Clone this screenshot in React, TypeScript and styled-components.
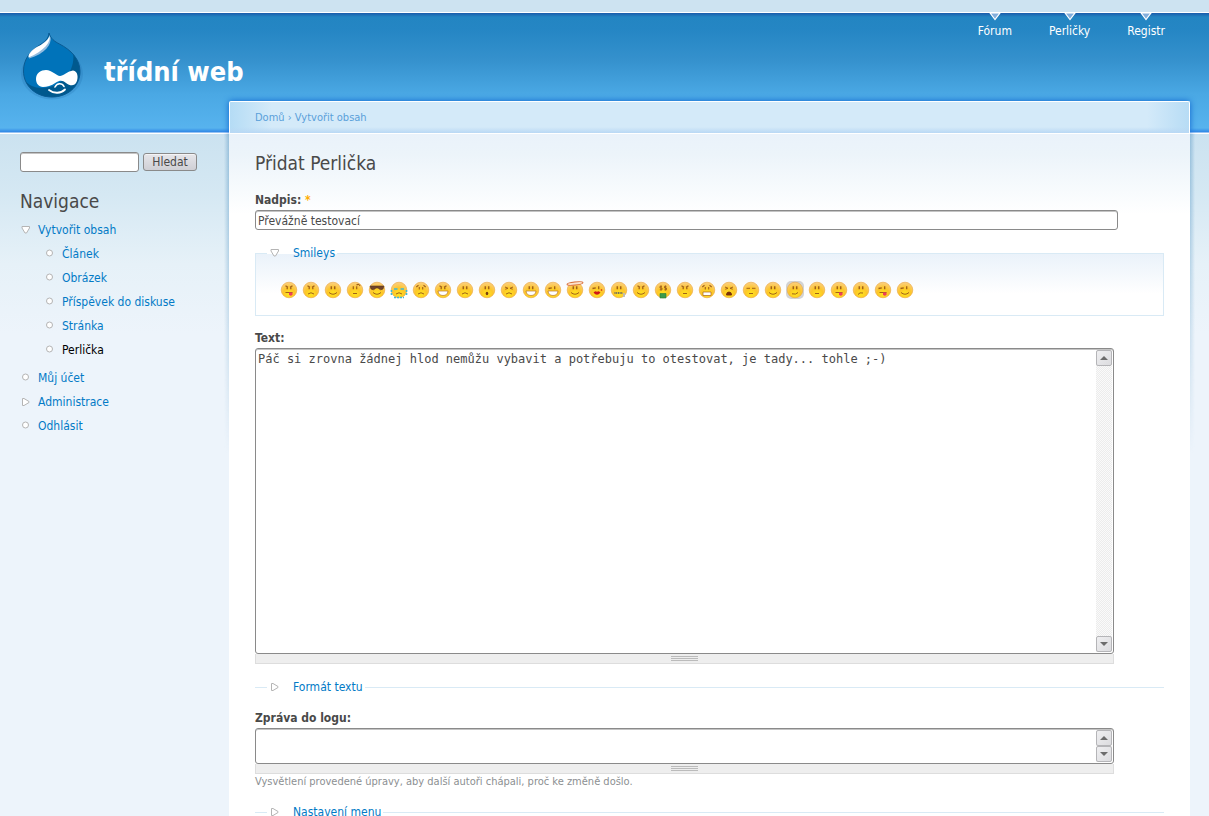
import React from "react";
import styled, { createGlobalStyle, css } from "styled-components";

const sans = '"DejaVu Sans Condensed", "DejaVu Sans", sans-serif';
const link = "#027ac6";
const ink = "#494949";

const GlobalStyle = createGlobalStyle`
  * { box-sizing: border-box; }
  body {
    margin: 0;
    background: #edf5fa;
    color: ${ink};
    font: 12px/20px ${sans};
  }
  a { color: ${link}; text-decoration: none; }
  ul { list-style: none; margin: 0; padding: 0; }
  h1, h2 { margin: 0; font-weight: normal; }
`;

const Page = styled.div`
  min-height: 100vh;
  overflow: hidden;
  background:
    linear-gradient(#cde3f1 0 12px, #fff 12px 13px, #1b5cab 13px, #2385c2 17px, #2586c4 30px, #3591cd 60px, #4aa8e4 94px, #57b3ee 128px, #2f87e6 132px, #fff 133px 134px, transparent 134px) 0 0 / 100% 134px no-repeat,
    linear-gradient(#cbe2f0, #d5e8f3 60px, #e6f1f8 130px, #edf4fb 200px) 0 134px / 100% 200px no-repeat,
    #edf4fb;
`;

const Header = styled.header`
  display: flex;
  justify-content: space-between;
  align-items: flex-start;
  height: 101px;
  padding: 13px 44px 0 16px;
`;

const Brand = styled.a`
  display: flex;
  align-items: center;
  gap: 16px;
  padding-top: 15px;
  color: #fff;
`;

const SiteName = styled.h1`
  padding-top: 12px;
  font-size: 27px;
  line-height: 32px;
  font-weight: bold;
`;

const PrimaryLinks = styled.ul`
  display: flex;
  gap: 37px;
`;

const PrimaryLink = styled.a`
  display: flex;
  flex-direction: column;
  align-items: center;
  color: #fff;
  svg { display: block; }
`;

const Columns = styled.div`
  display: grid;
  grid-template-columns: 229px minmax(0, 1fr);
  padding-right: 19px;
  min-height: calc(100vh - 101px);
`;

const Sidebar = styled.aside`
  padding: 51px 20px 0;
`;

const control = css`
  border: 1px solid #8a8a8a;
  border-radius: 3px;
  background: #fff;
  box-shadow: inset 0 1px 0 #c4c4c4;
  color: ${ink};
  font: 12px/16px ${sans};
  outline: none;
`;

const SearchForm = styled.form`
  display: flex;
  align-items: center;
  gap: 4px;
`;

const SearchInput = styled.input`
  ${control}
  width: 119px;
  height: 20px;
  padding: 0 2px;
`;

const SearchButton = styled.button`
  ${control}
  width: 54px;
  height: 18px;
  padding: 0;
  background: linear-gradient(#e6e6ea, #cfcfd5);
  box-shadow: inset 0 1px 0 #f4f4f6;
`;

const BlockTitle = styled.h2`
  margin-top: 16px;
  font-size: 19px;
  line-height: 26px;
`;

const Menu = styled.ul`
  margin-top: 4px;
  ul { padding: 0 0 4px 24px; }
`;

const MenuLink = styled.a<{ $active?: boolean }>`
  display: flex;
  align-items: center;
  gap: 7px;
  height: 24px;
  ${(p) => p.$active && "color: #000;"}
`;

const Card = styled.main`
  display: flex;
  flex-direction: column;
  min-width: 0;
`;

const Breadcrumb = styled.nav`
  height: 32px;
  padding: 6px 25px 0;
  border: 1px solid #fff;
  border-bottom: 0;
  border-radius: 2px 2px 0 0;
  background:
    linear-gradient(transparent 25px, #b9d8f4),
    linear-gradient(90deg, #b5dcf5, #d4eaf9 42px, #d4eaf9 calc(100% - 42px), #b7dcf5);
  box-shadow: 0 0 6px #0d62cf;
  color: #5aa0da;
  font-size: 11px;
  a { color: #5aa0da; }
`;

const Content = styled.div`
  position: relative;
  flex: 1;
  padding: 16px 26px 0;
  border-top: 1px solid #fff;
  background: linear-gradient(#eaf2fa, #ecf4fa 20px, #fff 80px);
  &::before,
  &::after {
    content: "";
    position: absolute;
    top: 0;
    width: 5px;
    height: 320px;
    mask-image: linear-gradient(#000, transparent);
  }
  &::before {
    right: 100%;
    background: linear-gradient(270deg, #96bfdb, transparent);
  }
  &::after {
    left: 100%;
    background: linear-gradient(90deg, #96bfdb, transparent);
  }
`;

const PageTitle = styled.h2`
  margin-bottom: 14px;
  font-size: 19px;
  line-height: 26px;
`;

const Field = styled.div`
  & + fieldset { margin-top: 13px; }
  fieldset + & { margin-top: 12px; }
`;

const Label = styled.label`
  display: block;
  height: 20px;
  font-weight: bold;
`;

const Required = styled.span`
  color: #ffae00;
`;

const TitleInput = styled.input`
  ${control}
  display: block;
  width: calc(100% - 46px);
  height: 20px;
  padding: 1px 2px 0;
`;

const Fieldset = styled.fieldset<{ $open?: boolean }>`
  min-width: 0;
  margin: 0;
  border: solid #d9eaf5;
  ${(p) =>
    p.$open
      ? css`
          border-width: 1px;
          padding: 19px 24px 17px 25px;
          background: linear-gradient(#eaf2fa, #fff 40px);
          legend { margin-left: -14px; }
        `
      : css`
          border-width: 1px 0 0;
          padding: 0 0 0 12px;
          legend { margin-bottom: -1px; }
        `}
`;

const Legend = styled.legend`
  padding: 0 2px;
  a { display: flex; align-items: center; gap: 13px; }
`;

const SmileyRow = styled.div`
  display: flex;
  flex-wrap: wrap;
  gap: 6px;
  a { display: block; width: 16px; height: 16px; }
  svg { display: block; overflow: visible; }
`;

const Resizable = styled.div`
  width: calc(100% - 50px);
`;

const AreaFrame = styled.div<{ $height: number }>`
  ${control}
  display: flex;
  height: ${(p) => p.$height}px;
  padding: 1px;
`;

const Area = styled.textarea`
  flex: 1;
  min-width: 0;
  padding: 0 1px;
  border: 0;
  outline: none;
  resize: none;
  overflow: hidden;
  background: transparent;
  color: ${ink};
  font: 12px/18px "DejaVu Sans Mono", "Liberation Mono", monospace;
`;

const ScrollTrack = styled.div`
  display: flex;
  flex-direction: column;
  justify-content: space-between;
  width: 16px;
  background: repeating-conic-gradient(#ececec 0 25%, #fafafa 0 50%) 0 0 / 2px 2px;
`;

const ScrollButton = styled.button`
  display: flex;
  align-items: center;
  justify-content: center;
  width: 16px;
  height: 16px;
  padding: 0;
  border: 1px solid #b5b5b8;
  border-radius: 2px;
  background: linear-gradient(135deg, #efeff1, #dcdcdf);
`;

const Grippie = styled.div`
  display: flex;
  justify-content: center;
  height: 10px;
  padding-top: 2px;
  border: 1px solid #ddd;
  border-top: 0;
  background: #eee;
  &::before {
    content: "";
    width: 27px;
    height: 5px;
    background: repeating-linear-gradient(#bbb 0 1px, transparent 1px 2px);
  }
`;

const Description = styled.p`
  margin: 0;
  color: #8c8f92;
  font-size: 11px;
  line-height: 15px;
`;

type Mark = "leaf" | "open" | "closed";

const MarkIcon = ({ kind }: { kind: Mark }) => (
  <svg width="11" height="10" viewBox="0 0 11 10" fill="#fff" stroke="#b4b4b4" strokeLinejoin="round" aria-hidden="true">
    {kind === "leaf" && <circle cx="5.5" cy="4" r="3" />}
    {kind === "open" && <path d="M2 1.5H9.5V3L6.5 8H5L2 3Z" />}
    {kind === "closed" && <path d="M2.5 1.5H4L9 4.5V5.5L4 8.5H2.5Z" />}
  </svg>
);

const Arrow = ({ up }: { up?: boolean }) => (
  <svg width="8" height="4" viewBox="0 0 8 4" aria-hidden="true">
    <path d={up ? "M0 4L4 0L8 4Z" : "M0 0H8L4 4Z"} fill="#6c6c6c" />
  </svg>
);

const dropOutline =
  "M33 5C34.5 10.5 38.5 13.5 43.5 16C55 22 64 31 64 43.5C64 59 51 69 36 69C20 69 7.5 58 7.5 43C7.5 31 14.5 23 23 17.5C28.5 14 32.5 11 33 5Z";

const Logo = () => (
  <svg width="72" height="76" viewBox="0 0 72 76" aria-hidden="true">
    <defs>
      <clipPath id="drop">
        <path d={dropOutline} />
      </clipPath>
    </defs>
    <ellipse cx="36" cy="46" rx="31" ry="25.5" fill="#1d6ba8" opacity=".22" />
    <g clipPath="url(#drop)">
      <rect width="72" height="76" fill="#0073ba" />
      <path d="M57 24C60 43 46 60 26 60C18 60 13 57 9 53L12 76H72V24Z" fill="#00598e" />
    </g>
    <path d={dropOutline} fill="none" stroke="#0a5b93" />
    <path d="M34.5 9C36 16 29 26 13 30.5L14 26Z" fill="#93bde0" />
    <path d="M33.5 7C35.5 14 28 23 12.5 29.5C12 25 18 20 24 17.5C29 14.5 32.5 12 33.5 7Z" fill="#fff" />
    <path d="M20 51C20 45 25 42 30 42C36 42 40.5 48 44 48C47 48 52 43 57 42.5C62 43 62.5 50 60.5 54C58.5 58.5 54 58 50 55C46.5 52 44 52 40 54.5C35 58 31 59 27 59C22.500 58.5 20 55.5 20 51Z" fill="#fff" />
    <path d="M39 59C41 55 46 54.5 48 58.5" fill="none" stroke="#fff" strokeWidth="1.6" strokeLinecap="round" />
    <path d="M33 62C38 66 45 65.5 49 61.5" fill="none" stroke="#fff" strokeWidth="1.8" strokeLinecap="round" />
  </svg>
);

type Eyes = "dots" | "evil" | "squint" | "shut" | "wink" | "shades" | "worried" | "quirk" | "cash" | "cry";
type Mouth = "smile" | "frown" | "flat" | "grin" | "tongue" | "o" | "lips" | "zip" | "bars" | "yell" | "half" | "skew" | "note";
type Face = { name: string; eyes: Eyes; mouth: Mouth; halo?: boolean; glow?: boolean };

const faces: Face[] = [
  { name: "evil tongue", eyes: "evil", mouth: "tongue" },
  { name: "angry", eyes: "evil", mouth: "frown" },
  { name: "smile", eyes: "dots", mouth: "smile" },
  { name: "sceptical", eyes: "quirk", mouth: "flat" },
  { name: "cool", eyes: "shades", mouth: "smile" },
  { name: "crying", eyes: "cry", mouth: "frown" },
  { name: "worried", eyes: "worried", mouth: "frown" },
  { name: "evil grin", eyes: "evil", mouth: "grin" },
  { name: "sad", eyes: "dots", mouth: "frown" },
  { name: "surprised", eyes: "dots", mouth: "o" },
  { name: "hurt", eyes: "squint", mouth: "frown" },
  { name: "grin", eyes: "dots", mouth: "grin" },
  { name: "wink grin", eyes: "wink", mouth: "grin" },
  { name: "angel", eyes: "dots", mouth: "smile", halo: true },
  { name: "kiss", eyes: "wink", mouth: "lips" },
  { name: "sealed", eyes: "dots", mouth: "zip" },
  { name: "devilish", eyes: "evil", mouth: "smile" },
  { name: "money", eyes: "cash", mouth: "note" },
  { name: "stern", eyes: "evil", mouth: "flat" },
  { name: "grimace", eyes: "worried", mouth: "bars" },
  { name: "yell", eyes: "squint", mouth: "yell" },
  { name: "sleepy", eyes: "shut", mouth: "flat" },
  { name: "happy", eyes: "dots", mouth: "smile" },
  { name: "smirk", eyes: "dots", mouth: "half", glow: true },
  { name: "neutral", eyes: "dots", mouth: "flat" },
  { name: "tongue", eyes: "dots", mouth: "tongue" },
  { name: "confused", eyes: "dots", mouth: "skew" },
  { name: "wink tongue", eyes: "wink", mouth: "tongue" },
  { name: "wink", eyes: "wink", mouth: "smile" },
];

const dots = "M6.3 4.2V7.2M9.7 4.2V7.2";

const eyeShapes: Record<Eyes, React.ReactNode> = {
  dots: <path d={dots} strokeWidth="1.5" />,
  evil: <path d="M4.5 3.8L7 5.3M11.5 3.8L9 5.3M6.2 5V7.2M9.8 5V7.2" strokeWidth="1.3" />,
  squint: <path d="M4 5L7 6.3L4.3 7.2M12 5L9 6.3L11.7 7.2" />,
  shut: <path d="M3.5 6.3H7M9 6.3H12.5" />,
  wink: <path d="M3.5 6.5L6.8 5.8M9.7 4.2V7.2" strokeWidth="1.3" />,
  shades: <path d="M1 4H15L14 7Q11.5 9 9 6H7Q4.5 9 2 7Z" fill="#71452c" stroke="#59351f" strokeWidth=".6" />,
  worried: <path d="M6.3 5V7.5M9.7 5V7.5M3.3 5L5.5 3.3M12.7 5L10.5 3.3" strokeWidth="1.1" />,
  quirk: <path d={dots + "M9.5 3Q12 1.5 13 4"} strokeWidth="1.2" />,
  cash: <path d="M7 4.3H5V6H7V7.8H4.8M6 3.5V8.5M11.5 4.3H9.5V6H11.5V7.8H9.3M10.5 3.5V8.5" strokeWidth=".9" />,
  cry: (
    <g stroke="#3fb9d8">
      <path d="M3 7H6.5M9.5 7H13" strokeWidth="1.5" />
      <path d="M.5 8V14M15.500 8V14M3 15.500H13" strokeWidth="1.6" strokeDasharray="2 1" />
    </g>
  ),
};

const mouthShapes: Record<Mouth, React.ReactNode> = {
  smile: <path d="M4 10.5Q8 14 12 10.5" />,
  frown: <path d="M5 12Q8 9.5 11 12" />,
  flat: <path d="M6 11.5H10" />,
  half: <path d="M5 11.8Q9 13 11 10.5" />,
  skew: <path d="M5 12.5Q6.5 10 10 11" />,
  grin: <path d="M3 9H13Q12.500 13.5 8 13.500T3 9Z" fill="#fff" stroke="#b87328" strokeWidth=".7" />,
  tongue: (
    <>
      <path d="M4.5 10.5H11.5" />
      <path d="M8 10.5H11.500V12.500Q9.8 15 8 12.5Z" fill="#ef3d5b" stroke="none" />
    </>
  ),
  o: <ellipse cx="8" cy="11.5" rx="1.3" ry="1.8" fill="#7b3f12" stroke="none" />,
  lips: (
    <g fill="#cf1818" stroke="none">
      <path d="M4.5 10.5Q7 8.5 8 10Q9 8.500 11.5 10.5Q8 15 4.5 10.5Z" />
      <circle cx="12.5" cy="8" r=".8" />
    </g>
  ),
  zip: (
    <>
      <path d="M3.5 11H12" stroke="#69665f" strokeWidth="2.2" strokeDasharray="1 .7" />
      <path d="M13 11V15" stroke="#bbb" strokeWidth="1.8" />
    </>
  ),
  bars: <path d="M4 10H12V13.5H4Z" fill="#fff" stroke="#a8601a" strokeWidth=".7" />,
  yell: <path d="M5.5 13Q5.5 10 8 10T10.5 13Z" fill="#7b3008" stroke="#7b3008" />,
  note: <path d="M5 11.5H11V16H5Z" fill="#3d9a4c" stroke="#277d37" strokeWidth=".6" />,
};

const Smiley = ({ face }: { face: Face }) => (
  <svg width="16" height="16" viewBox="0 0 16 16" aria-hidden="true">
    <defs>
      <radialGradient id="smiley-skin" cx=".5" cy=".75" r=".75">
        <stop offset="0" stopColor="#ffe61c" />
        <stop offset=".5" stopColor="#fdc62a" />
        <stop offset="1" stopColor="#fbcf85" />
      </radialGradient>
    </defs>
    {face.glow && <rect x="-1" y="-1" width="18" height="18" rx="5" fill="#b8b8b8" opacity=".6" />}
    <circle cx="8" cy="8" r="7.8" fill="url(#smiley-skin)" stroke="#eaa53c" strokeWidth=".6" />
    <g fill="none" stroke="#a0611a">
      {eyeShapes[face.eyes]}
      {mouthShapes[face.mouth]}
    </g>
    {face.halo && <ellipse cx="8" cy="1.5" rx="8" ry="1.6" fill="#fbe3cd" stroke="#d96f3c" transform="rotate(-6 8 1.5)" />}
  </svg>
);

const primaryLinks = ["Fórum", "Perličky", "Registr"];
const contentTypes = ["Článek", "Obrázek", "Příspěvek do diskuse", "Stránka", "Perlička"];

const MenuItem = ({ text, mark, active, children }: { text: string; mark: Mark; active?: boolean; children?: React.ReactNode }) => (
  <li>
    <MenuLink href="#" $active={active}>
      <MarkIcon kind={mark} />
      {text}
    </MenuLink>
    {children}
  </li>
);

const TextBox = ({ id, height, value }: { id: string; height: number; value?: string }) => (
  <Resizable>
    <AreaFrame $height={height}>
      <Area id={id} defaultValue={value} spellCheck={false} />
      <ScrollTrack>
        <ScrollButton type="button" aria-label="Nahoru"><Arrow up /></ScrollButton>
        <ScrollButton type="button" aria-label="Dolů"><Arrow /></ScrollButton>
      </ScrollTrack>
    </AreaFrame>
    <Grippie />
  </Resizable>
);

const Section = ({ title, open, children }: { title: string; open?: boolean; children?: React.ReactNode }) => (
  <Fieldset $open={open}>
    <Legend>
      <a href="#">
        <MarkIcon kind={open ? "open" : "closed"} />
        {title}
      </a>
    </Legend>
    {children}
  </Fieldset>
);

export default function App() {
  return (
    <Page>
      <GlobalStyle />
      <Header>
        <Brand href="#">
          <Logo />
          <SiteName>třídní web</SiteName>
        </Brand>
        <PrimaryLinks>
          {primaryLinks.map((text) => (
            <li key={text}>
              <PrimaryLink href="#">
                <svg width="12" height="8" viewBox="0 0 12 8" aria-hidden="true">
                  <path d="M1 0L6 6.5L11 0Z" fill="#82aedc" stroke="#fff" strokeWidth="1.2" />
                </svg>
                {text}
              </PrimaryLink>
            </li>
          ))}
        </PrimaryLinks>
      </Header>
      <Columns>
        <Sidebar>
          <SearchForm>
            <SearchInput type="text" aria-label="Hledat" />
            <SearchButton type="button">Hledat</SearchButton>
          </SearchForm>
          <BlockTitle>Navigace</BlockTitle>
          <Menu>
            <MenuItem text="Vytvořit obsah" mark="open">
              <ul>
                {contentTypes.map((text) => (
                  <MenuItem key={text} text={text} mark="leaf" active={text === "Perlička"} />
                ))}
              </ul>
            </MenuItem>
            <MenuItem text="Můj účet" mark="leaf" />
            <MenuItem text="Administrace" mark="closed" />
            <MenuItem text="Odhlásit" mark="leaf" />
          </Menu>
        </Sidebar>
        <Card>
          <Breadcrumb>
            <a href="#">Domů</a> › <a href="#">Vytvořit obsah</a>
          </Breadcrumb>
          <Content>
            <PageTitle>Přidat Perlička</PageTitle>
            <Field>
              <Label htmlFor="title">
                Nadpis: <Required>*</Required>
              </Label>
              <TitleInput id="title" type="text" defaultValue="Převážně testovací" spellCheck={false} />
            </Field>
            <Section title="Smileys" open>
              <SmileyRow>
                {faces.map((face) => (
                  <a key={face.name} href="#" aria-label={face.name}>
                    <Smiley face={face} />
                  </a>
                ))}
              </SmileyRow>
            </Section>
            <Field>
              <Label htmlFor="body">Text:</Label>
              <TextBox
                id="body"
                height={306}
                value="Páč si zrovna žádnej hlod nemůžu vybavit a potřebuju to otestovat, je tady... tohle ;-)"
              />
            </Field>
            <Section title="Formát textu" />
            <Field>
              <Label htmlFor="log">Zpráva do logu:</Label>
              <TextBox id="log" height={36} />
              <Description>Vysvětlení provedené úpravy, aby další autoři chápali, proč ke změně došlo.</Description>
            </Field>
            <Section title="Nastavení menu" />
          </Content>
        </Card>
      </Columns>
    </Page>
  );
}
